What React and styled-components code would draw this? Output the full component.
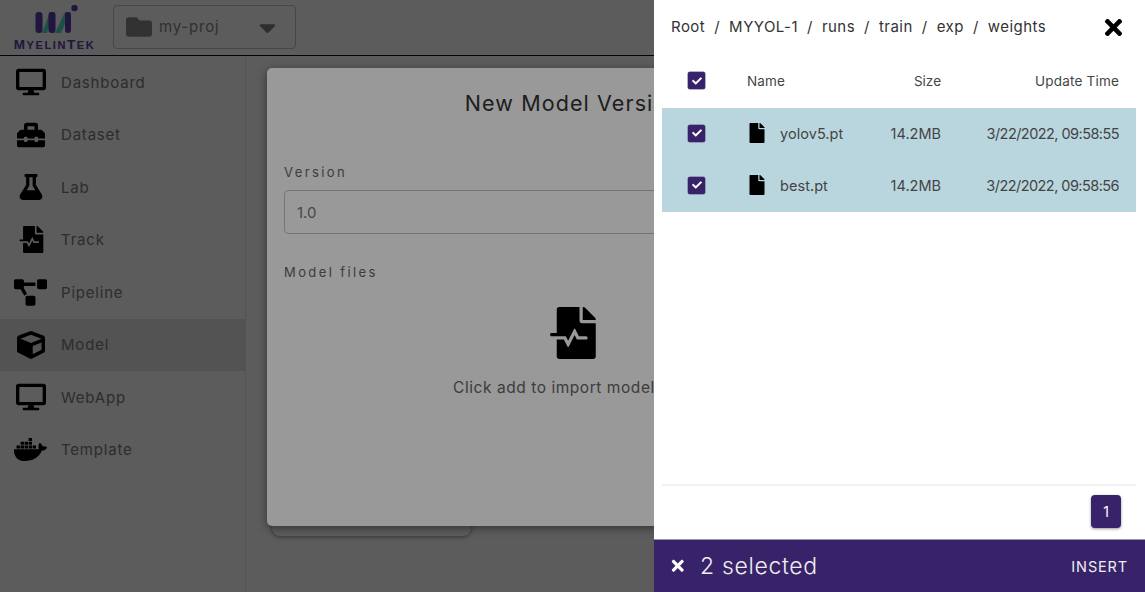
import React from "react";
import styled, { createGlobalStyle } from "styled-components";
import {
  FaDesktop, FaToolbox, FaFlask, FaFileMedicalAlt, FaProjectDiagram, FaCube, FaDocker,
  FaFolder, FaCaretDown, FaTimes, FaFile, FaCheck,
} from "react-icons/fa";

const FONT = `"Inter", "Noto Sans", "Liberation Sans", sans-serif`;
const PURPLE = "#38236b";

const Global = createGlobalStyle`
  html, body { margin: 0; padding: 0; height: 100%; overflow: hidden; }
  body { font-family: ${FONT}; background: #fff; }
  * { box-sizing: border-box; }
`;

const Page = styled.div`
  position: relative; width: 1145px; height: 592px; overflow: hidden;
  display: flex; flex-direction: column; background: #fff;
`;
const Header = styled.header`
  height: 56px; flex: none; display: flex; align-items: flex-start; gap: 17px;
  padding: 5px 0 0 13px; border-bottom: 1px solid #100a28; background: #fff;
`;
const Logo = styled.div`display: flex; flex-direction: column; align-items: center; width: 83px; height: 50px;`;
const LogoMark = styled.svg`width: 70px; height: 31px; flex: none; margin-left: 2px;`;
const LogoText = styled.span`
  font-family: "Liberation Sans", sans-serif; font-weight: 700; font-size: 13.5px; line-height: 14px;
  letter-spacing: 1.6px; color: #5a3fb0; white-space: nowrap; margin-top: 2px;
`;
const LogoSmall = styled.span`font-size: 11px;`;
const ProjectSelect = styled.div`
  width: 183px; height: 44px; border: 1px solid #c6c6c6; border-radius: 4px; display: flex; align-items: center;
  padding: 0 14px 0 12px; color: #8a8a8a; font-size: 15px; letter-spacing: .8px; gap: 7px;
  svg:first-child { color: #8c8c8c; font-size: 26px; flex: none; }
`;
const ProjectName = styled.span`flex: 1; margin-top: -2px;`;
const Caret = styled(FaCaretDown)`color: #808080; font-size: 27px; flex: none;`;
const Body = styled.div`flex: 1; display: flex; min-height: 0;`;
const Sidebar = styled.nav`width: 246px; flex: none; border-right: 1px solid #e6e6e6;`;
const NavItem = styled.div`
  height: 52.5px; display: flex; align-items: center; padding-left: 14px;
  background: ${(p) => (p.$active ? "#e6e6e6" : "transparent")};
  color: #7d7d7d; font-size: 15px; letter-spacing: .8px;
`;
const NavIcon = styled.span`
  width: 47px; display: flex; justify-content: flex-start; padding-left: ${(p) => p.$pad || 0}px;
  font-size: ${(p) => p.$size || 30}px; color: #000; line-height: 0;
`;
const Main = styled.main`flex: 1; padding: 44px 0 0 26px;`;
const BackCard = styled.div`width: 199px; height: 436px; border-radius: 8px; box-shadow: 0 1px 4px rgba(0,0,0,.45); background: #fff;`;

const Backdrop = styled.div`position: absolute; inset: 0; background: rgba(0,0,0,.4);`;
const Modal = styled.section`
  position: absolute; left: 267px; top: 68px; width: 612px; height: 458px; background: #fff; border-radius: 5px;
  padding: 0 17px; box-shadow: 0 2px 8px rgba(0,0,0,.45); display: flex; flex-direction: column;
`;
const ModalTitle = styled.h2`
  margin: 23px 0 0; font-size: 21.5px; font-weight: 400; text-align: center; color: #333; line-height: 24px; letter-spacing: 1.1px;
`;
const FieldLabel = styled.label`font-size: 13px; letter-spacing: 2.4px; color: #666; line-height: 16px;`;
const VersionLabel = styled(FieldLabel)`margin-top: 49px;`;
const FilesLabel = styled(FieldLabel)`margin-top: 30px;`;
const VersionInput = styled.div`
  margin-top: 10px; height: 44px; border: 1px solid #c4c4c4; border-radius: 4px; display: flex; align-items: center;
  padding: 0 12px; font-size: 15px; color: #777;
`;
const Drop = styled.div`display: flex; flex-direction: column; align-items: center; margin-top: 27px;`;
const DropIcon = styled(FaFileMedicalAlt)`font-size: 52px; color: #000;`;
const DropText = styled.div`margin-top: 19px; font-size: 15.5px; color: #666; letter-spacing: .55px; white-space: nowrap;`;

const Drawer = styled.aside`
  position: absolute; right: 0; top: 0; width: 491px; height: 592px; background: #fff;
  display: flex; flex-direction: column;
`;
const DrawerTop = styled.div`height: 55px; flex: none; display: flex; align-items: center; padding: 0 19px 2px 17px;`;
const Crumbs = styled.div`flex: 1; display: flex; font-size: 15px; color: #333; letter-spacing: .47px;`;
const Sep = styled.span`margin: 0 9px;`;
const CloseIcon = styled(FaTimes)`font-size: 25px; color: #000; flex: none; margin-top: 2px;`;
const Table = styled.div`flex: 1; margin: 0 9px 0 8px; display: flex; flex-direction: column;`;
const Row = styled.div`
  display: grid; grid-template-columns: 59px 1fr 81px 178px; align-items: center; padding: 0 17px 2px 26px;
  height: ${(p) => p.$h}px; background: ${(p) => (p.$sel ? "#b9d6de" : "transparent")};
  color: #444; font-size: ${(p) => (p.$head ? 13.5 : 14.5)}px;
`;
const Check = styled.span`
  width: 17px; height: 17px; border-radius: 2px; background: ${PURPLE}; color: #fff; display: flex; align-items: center;
  justify-content: center; font-size: 10px; box-shadow: 0 0 0 .5px #6a5a96;
`;
const NameCell = styled.div`display: flex; align-items: center; letter-spacing: ${(p) => p.$ls ?? 0.05}px;`;
const FileGlyph = styled(FaFile)`font-size: 20px; color: #000; margin: 0 13px 0 0; flex: none;`;
const Right = styled.div`text-align: right; letter-spacing: ${(p) => p.$ls || 0}px; white-space: nowrap;`;
const Pager = styled.div`
  flex: none; height: 55px; margin: 0 9px 0 8px; border-top: 2px solid #f2f2f2; display: flex; justify-content: flex-end;
  padding: 9px 15px 0 0;
`;
const PageBtn = styled.button`
  width: 30px; height: 33px; border: 0; border-radius: 4px; background: ${PURPLE}; color: #fff; font: 14px ${FONT};
  box-shadow: 0 1px 3px rgba(0,0,0,.4); padding: 0;
`;
const Footer = styled.div`
  flex: none; height: 53px; background: ${PURPLE}; color: #fff; display: flex; align-items: center; padding: 0 17px 0 15px;
  border-top: 1px solid #9a91b2;
`;
const FooterX = styled(FaTimes)`font-size: 17.5px; flex: none; margin-right: 13.5px;`;
const Count = styled.span`flex: 1; font-size: 23px; font-weight: 300; letter-spacing: .65px; color: #eee;`;
const Insert = styled.span`font-size: 14.5px; color: #eee; letter-spacing: .85px;`;

const nav = [
  ["Dashboard", FaDesktop, 30, 2],
  ["Dataset", FaToolbox, 28, 3],
  ["Lab", FaFlask, 26, 4],
  ["Track", FaFileMedicalAlt, 27, 4],
  ["Pipeline", FaProjectDiagram, 33, 0],
  ["Model", FaCube, 28, 3],
  ["WebApp", FaDesktop, 30, 2],
  ["Template", FaDocker, 33, 0],
];

const files = [
  ["yolov5.pt", "14.2MB", "3/22/2022, 09:58:55"],
  ["best.pt", "14.2MB", "3/22/2022, 09:58:56"],
];
const crumbs = ["Root", "MYYOL-1", "runs", "train", "exp", "weights"];

export default function App() {
  return (
    <Page>
      <Global />
      <Header>
        <Logo>
          <LogoMark viewBox="0 0 70 31">
            <g fill="#55e0d0">
              <path d="M21 28 L26 28 L34 7 L29 7Z" />
              <path d="M34 28 L40 28 L49 7 L44 7Z" />
            </g>
            <g fill="#5a3fb0">
              <rect x="14.5" y="7" width="7" height="21" rx="3" />
              <rect x="27.5" y="7" width="7" height="21" rx="3" />
              <rect x="44" y="7" width="6" height="21" rx="3" />
              <circle cx="53.5" cy="3" r="3.2" />
            </g>
          </LogoMark>
          <LogoText>M<LogoSmall>YELIN</LogoSmall>T<LogoSmall>EK</LogoSmall></LogoText>
        </Logo>
        <ProjectSelect>
          <FaFolder />
          <ProjectName>my-proj</ProjectName>
          <Caret />
        </ProjectSelect>
      </Header>
      <Body>
        <Sidebar>
          {nav.map(([label, Icon, size, pad]) => (
            <NavItem key={label} $active={label === "Model"}>
              <NavIcon $size={size} $pad={pad}><Icon /></NavIcon>
              {label}
            </NavItem>
          ))}
        </Sidebar>
        <Main><BackCard /></Main>
      </Body>
      <Backdrop />
      <Modal>
        <ModalTitle>New Model Version</ModalTitle>
        <VersionLabel>Version</VersionLabel>
        <VersionInput>1.0</VersionInput>
        <FilesLabel>Model files</FilesLabel>
        <Drop>
          <DropIcon />
          <DropText>Click add to import model files</DropText>
        </Drop>
      </Modal>
      <Backdrop />
      <Drawer>
        <DrawerTop>
          <Crumbs>
            {crumbs.map((c, i) => (
              <React.Fragment key={c}>
                {i > 0 && <Sep>/</Sep>}
                <span>{c}</span>
              </React.Fragment>
            ))}
          </Crumbs>
          <CloseIcon />
        </DrawerTop>
        <Table>
          <Row $h={53} $head>
            <Check><FaCheck /></Check>
            <NameCell $ls={0.1}>Name</NameCell>
            <Right>Size</Right>
            <Right $ls={0.2}>Update Time</Right>
          </Row>
          {files.map(([n, s, t]) => (
            <Row key={n} $h={52} $sel>
              <Check><FaCheck /></Check>
              <NameCell><FileGlyph />{n}</NameCell>
              <Right>{s}</Right>
              <Right $ls={-0.55}>{t}</Right>
            </Row>
          ))}
        </Table>
        <Pager><PageBtn>1</PageBtn></Pager>
        <Footer>
          <FooterX />
          <Count>2 selected</Count>
          <Insert>INSERT</Insert>
        </Footer>
      </Drawer>
    </Page>
  );
}
